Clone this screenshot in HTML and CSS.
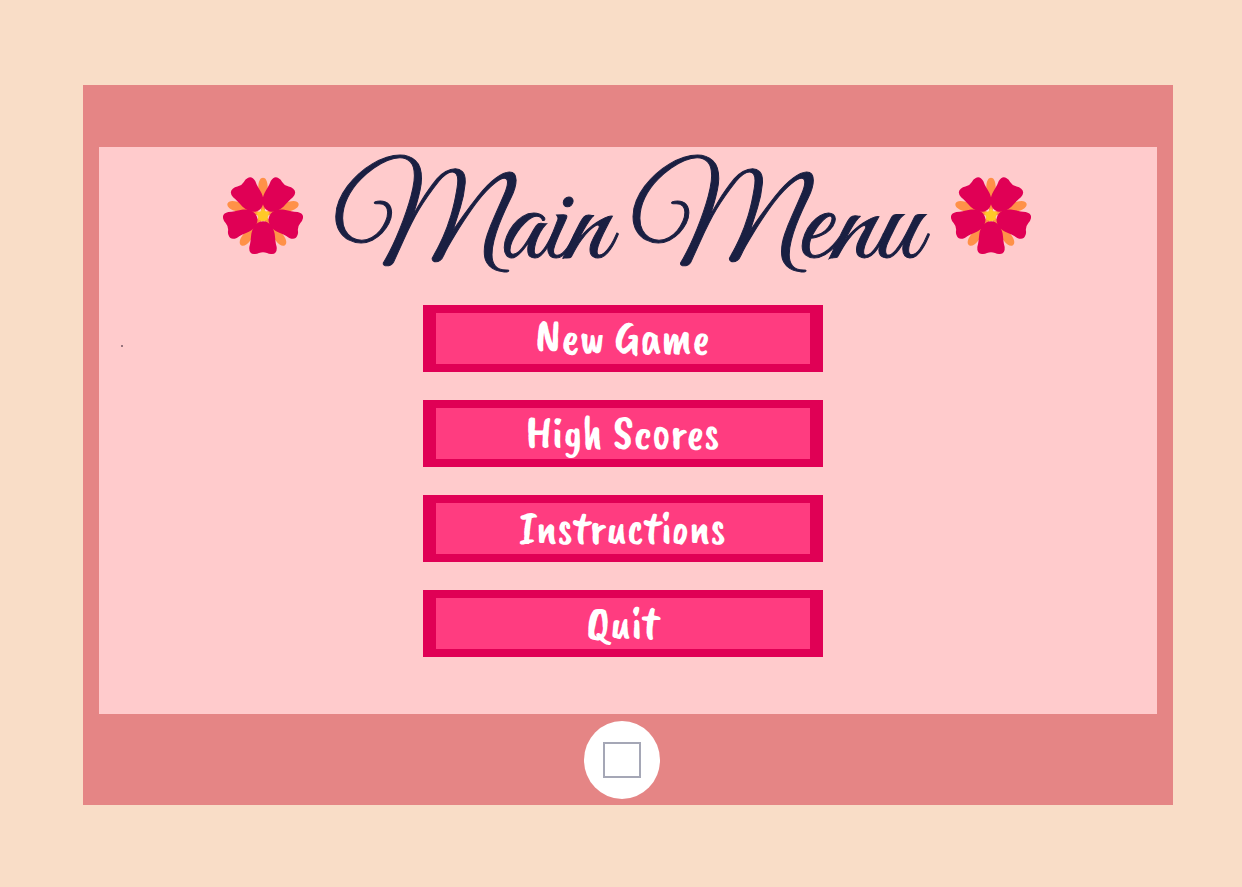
FILE: index.html
```html
<!DOCTYPE html>
<html lang="en">
<head>
<meta charset="utf-8">
<title>Main Menu</title>
<link rel="stylesheet" href="styles.css">
</head>
<body>
<svg class="defs" aria-hidden="true">
  <defs>
    <path id="leaf" d="M156 150C144 120 141 95 142 65C142 48 148 38 156 38C164 38 170 48 170 65C171 95 168 120 156 150Z"/>
    <path id="petal" d="M156 169C137 169 125 186 121 206C119 222 119 232 115 246Q113 266 129 267Q137 268 144 264Q156 259 168 264Q175 268 183 267Q199 266 197 246C193 232 193 222 191 206C187 186 175 169 156 169Z"/>
    <symbol id="flower" viewBox="36 33 240 240">
      <g fill="#ff9148">
        <use href="#leaf"/>
        <use href="#leaf" transform="rotate(72 156 150)"/>
        <use href="#leaf" transform="rotate(144 156 150)"/>
        <use href="#leaf" transform="rotate(216 156 150)"/>
        <use href="#leaf" transform="rotate(288 156 150)"/>
      </g>
      <g fill="#e00055">
        <use href="#petal"/>
        <use href="#petal" transform="rotate(72 156 150)"/>
        <use href="#petal" transform="rotate(144 156 150)"/>
        <use href="#petal" transform="rotate(216 156 150)"/>
        <use href="#petal" transform="rotate(288 156 150)"/>
      </g>
      <path fill="#ffc928" d="M156 130L162 138L175 142L171 154L169 164L156 169L142 164L141 154L136 143L149 139Z"/>
    </symbol>
  </defs>
</svg>
<main class="device">
  <section class="screen">
    <header class="heading">
      <svg class="flower" aria-hidden="true"><use href="#flower"/></svg>
      <h1 class="title">Main Menu</h1>
      <svg class="flower" aria-hidden="true"><use href="#flower"/></svg>
    </header>
    <span class="speck" aria-hidden="true"></span>
    <nav class="menu">
      <button class="item" type="button">New Game</button>
      <button class="item" type="button">High Scores</button>
      <button class="item" type="button">Instructions</button>
      <button class="item" type="button">Quit</button>
    </nav>
  </section>
  <footer class="base">
    <button class="home" type="button" aria-label="Home"><span class="square"></span></button>
  </footer>
</main>
</body>
</html>
```
FILE: styles.css
```css
* {
  box-sizing: border-box;
}

body {
  margin: 0;
  min-height: 100vh;
  display: flex;
  padding: 85px 69px 82px 83px;
  background: #f9ddc7;
}

.defs {
  position: absolute;
  width: 0;
  height: 0;
}

.device {
  flex: 1;
  display: flex;
  flex-direction: column;
  padding: 62px 16px 0;
  background: #e58585;
}

.screen {
  position: relative;
  flex: 1;
  background: #ffcbcc;
}

.heading {
  display: flex;
  justify-content: center;
  align-items: center;
  gap: 30px;
  height: 138px;
  padding-right: 2px;
}

.flower {
  width: 80px;
  height: 80px;
}

.title {
  margin: 0;
  padding-top: 28px;
  font: 400 125px/136px "Great Vibes", "Liberation Serif", serif;
  color: #1a1f42;
  -webkit-text-stroke: 1px #1a1f42;
  white-space: nowrap;
}

.speck {
  position: absolute;
  left: 22px;
  top: 198px;
  width: 2px;
  height: 2px;
  background: #98747d;
}

.menu {
  display: flex;
  flex-direction: column;
  align-items: center;
  gap: 28px;
  padding: 20px 11px 52px 0;
}

.item {
  width: 400px;
  height: 67px;
  padding: 0 0 4px;
  border: solid #e00055;
  border-width: 8px 13px;
  background: #ff3c80;
  color: #fff;
  font: 400 48px/46px "Caveat Brush", Lato, sans-serif;
}

.base {
  display: flex;
  justify-content: center;
  align-items: center;
  height: 91px;
  padding-right: 12px;
}

.home {
  display: grid;
  place-items: center;
  width: 76px;
  height: 78px;
  padding: 0;
  border: 0;
  border-radius: 50%;
  background: #fff;
}

.square {
  width: 38px;
  height: 36px;
  border: 2px solid #a5a7b6;
}
```
